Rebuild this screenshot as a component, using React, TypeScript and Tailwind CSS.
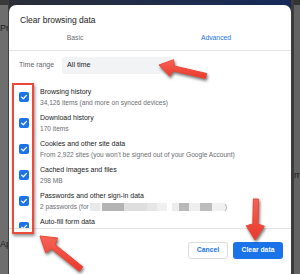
import React from 'react';

type Pt = [number, number];

const items = [
  { title: 'Browsing history', sub: '34,126 items (and more on synced devices)' },
  { title: 'Download history', sub: '170 items' },
  { title: 'Cookies and other site data', sub: "From 2,922 sites (you won't be signed out of your Google Account)" },
  { title: 'Cached images and files', sub: '298 MB' },
  { title: 'Passwords and other sign-in data', sub: '2 passwords (for', blurred: true },
  { title: 'Auto-fill form data', sub: '' },
];

// pixelated blur blocks after "(for"
const blur = [
  { w: 10, c: '#e9e9e9' },
  { w: 2, c: '#f7f7f7' },
  { w: 22, c: '#b4b4b4' },
  { w: 23, c: '#dedede' },
  { w: 10, c: '#e6e6e6' },
  { w: 10, c: '#f0f0f0' },
  { w: 5, c: '#ffffff' },
  { w: 7, c: '#ececec' },
  { w: 10, c: '#b9b9b9' },
  { w: 11, c: '#eeeeee' },
  { w: 12, c: '#bcbcbc' },
  { w: 13, c: '#f1f1f1' },
];

const arrowPoints = (tail: Pt, tip: Pt, shaft: number, headLen: number, headHalf: number) => {
  const dx = tip[0] - tail[0];
  const dy = tip[1] - tail[1];
  const len = Math.hypot(dx, dy);
  const ux = dx / len;
  const uy = dy / len;
  const nx = -uy;
  const ny = ux;
  const bx = tip[0] - ux * headLen;
  const by = tip[1] - uy * headLen;
  const pts: Pt[] = [
    [tail[0] + nx * shaft, tail[1] + ny * shaft],
    [bx + nx * shaft, by + ny * shaft],
    [bx + ux * 2 + nx * headHalf, by + uy * 2 + ny * headHalf],
    tip,
    [bx + ux * 2 - nx * headHalf, by + uy * 2 - ny * headHalf],
    [bx - nx * shaft, by - ny * shaft],
    [tail[0] - nx * shaft, tail[1] - ny * shaft],
  ];
  return pts.map((p) => `${p[0].toFixed(1)},${p[1].toFixed(1)}`).join(' ');
};

const Check = () => (
  <div className="w-[10px] h-[10px] shrink-0 rounded-[2px] bg-[#1a73e8] flex items-center justify-center">
    <svg width="8" height="8" viewBox="0 0 8 8">
      <path d="M1.6 4.1 L3.3 5.7 L6.5 2.4" fill="none" stroke="white" strokeWidth="1.3" strokeLinecap="round" strokeLinejoin="round" />
    </svg>
  </div>
);

export default function App() {
  const arrows = [
    arrowPoints([206, 76], [159, 65], 2.6, 15, 8.5),
    arrowPoints([256, 199], [255, 240], 2.6, 16, 9),
    arrowPoints([81, 269], [40, 236], 2.8, 17, 9.5),
  ];

  return (
    <div className="relative w-[300px] h-[274px] overflow-hidden flex font-['Liberation_Sans',Arial,sans-serif]">
      {/* window behind, left */}
      <div className="w-[9px] shrink-0 flex flex-col bg-[#6e6e6e] border-r border-[#3f3f3f] overflow-hidden">
        <div className="h-[5px] shrink-0 bg-[#3a3a3a]" />
        <div className="pt-[17px] text-[9px] leading-[12px] text-[#1c1c1c] whitespace-nowrap">Pr</div>
        <div className="mt-auto pb-[24px] text-[9px] leading-[12px] text-[#1c1c1c] whitespace-nowrap">Ap</div>
      </div>

      {/* dialog column */}
      <div className="flex-1 flex flex-col pt-[5px] bg-gradient-to-r from-[#2a2e37] to-[#16295a]">
        <div className="flex-1 bg-white rounded-t-[7px] flex flex-col overflow-hidden">
          <div className="pl-[11px] pt-[9px] text-[8.5px] leading-[12px] text-[#202124]">Clear browsing data</div>

          <div className="flex h-[25px] items-center border-b border-[#e4e4e4] text-[6.8px]">
            <div className="w-[132px] text-center text-[#6b6e72]">Basic</div>
            <div className="w-[150px] text-center text-[#1a73e8]">Advanced</div>
          </div>

          <div className="flex items-center pl-[10px] mt-[6px] h-[17px]">
            <span className="w-[43px] text-[7px] text-[#5f6368]">Time range</span>
            <div className="w-[110px] h-[17px] rounded-[3px] bg-[#f1f3f4] pl-[5px] flex items-center text-[7.2px] text-[#202124]">
              All time
            </div>
          </div>

          <div className="h-[154px] overflow-hidden pt-[12px] pl-[10px] flex flex-col gap-[4px]">
            {items.map((it) => (
              <div key={it.title} className="flex items-center gap-[11px] h-[22px] shrink-0">
                <Check />
                <div className="flex flex-col whitespace-nowrap">
                  <span className="h-[11px] leading-[11px] text-[7px] text-[#202124]">{it.title}</span>
                  <span className="h-[11px] leading-[11px] text-[6.6px] flex items-center text-[#6b6e72]">
                    {it.sub}
                    {it.blurred && (
                      <>
                        <span className="flex h-[8px] ml-[1px]">
                          {blur.map((b, i) => (
                            <span key={i} className="h-full" style={{ width: b.w, background: b.c }} />
                          ))}
                        </span>
                        <span>)</span>
                      </>
                    )}
                  </span>
                </div>
              </div>
            ))}
          </div>

          <div className="flex-1 border-t border-[#e4e4e4] flex justify-end gap-[5px] pr-[8px] pt-[13px]">
            <button className="w-[40px] h-[17px] rounded-[3px] border border-[#dadce0] bg-white text-[6.8px] font-bold text-[#1a73e8]">
              Cancel
            </button>
            <button className="w-[50px] h-[17px] rounded-[3px] bg-[#1a73e8] text-[6.8px] font-bold text-white">
              Clear data
            </button>
          </div>
        </div>
      </div>

      {/* window behind, right */}
      <div className="w-[10px] shrink-0 flex flex-col bg-[#636363] border-l-[3px] border-[#3b3b3b] overflow-hidden">
        <div className="h-[5px] shrink-0 bg-[#333]" />
        <div className="pt-[164px] text-[9px] leading-[12px] text-[#1c1c1c] whitespace-nowrap">m</div>
      </div>

      {/* annotations */}
      <div className="absolute left-[12px] top-[83px] w-[22px] h-[151px] border-2 border-[#ec4a3d] shadow-[1px_2px_3px_rgba(0,0,0,0.45)]" />
      <svg
        className="absolute inset-0 pointer-events-none drop-shadow-[1px_2px_1.5px_rgba(0,0,0,0.55)]"
        width="300"
        height="274"
        viewBox="0 0 300 274"
      >
        <defs>
          <linearGradient id="arrowFill" x1="0" y1="0" x2="0" y2="1">
            <stop offset="0" stopColor="#f66356" />
            <stop offset="1" stopColor="#e8392c" />
          </linearGradient>
        </defs>
        {arrows.map((pts, i) => (
          <polygon key={i} points={pts} fill="url(#arrowFill)" stroke="#ee4536" strokeWidth="1" strokeLinejoin="round" />
        ))}
      </svg>
    </div>
  );
}
